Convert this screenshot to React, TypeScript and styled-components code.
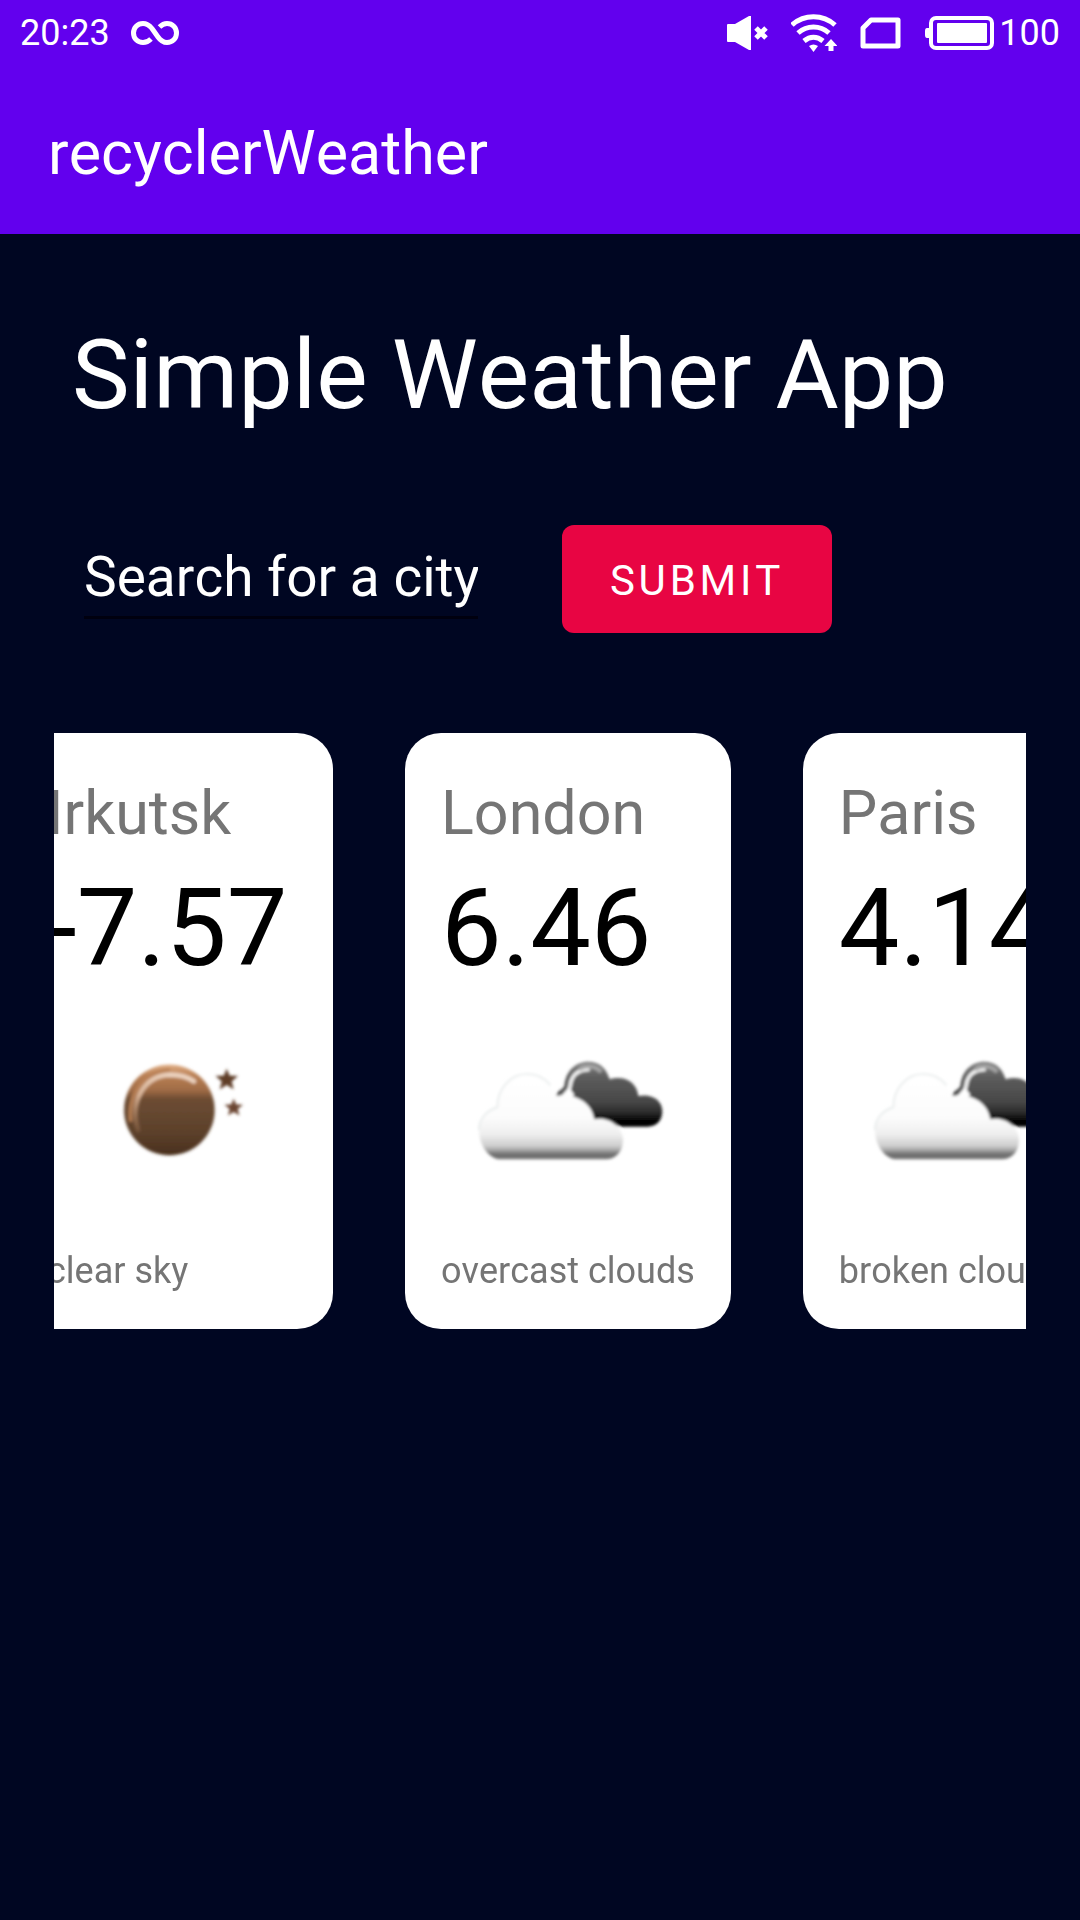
import React, { useLayoutEffect, useRef } from 'react';
import styled, { createGlobalStyle } from 'styled-components';

const GlobalStyle = createGlobalStyle`
  *, *::before, *::after { box-sizing: border-box; }
  body {
    margin: 0;
    background: #000622;
    font-family: Roboto, "Noto Sans", sans-serif;
    font-kerning: none;
  }
`;

const Screen = styled.div`
  min-height: 100vh;
  background: #000622;
  color: #fff;
`;

const TopArea = styled.header`
  background: #6200ee;
`;

const StatusBar = styled.div`
  display: flex;
  align-items: center;
  justify-content: space-between;
  height: 66px;
  padding: 0 20px;
  font-size: 36px;
  line-height: 44px;
`;

const StatusGroup = styled.div<{ $gap: number }>`
  display: flex;
  align-items: center;
  gap: ${(p) => p.$gap}px;
`;

const Battery = styled.div`
  display: flex;
  align-items: center;
  gap: 4px;
`;

const Glyph = styled.svg`
  display: block;
  flex: none;
`;

const Toolbar = styled.div`
  display: flex;
  align-items: center;
  height: 168px;
  padding: 6px 48px 0;
`;

const AppName = styled.span`
  font-size: 61px;
  line-height: 80px;
`;

const Content = styled.main`
  padding: 85px 54px 0;
`;

const Heading = styled.h1`
  margin: 0;
  padding: 0 18px;
  font-size: 97px;
  font-weight: 400;
  line-height: 112px;
`;

const SearchForm = styled.form`
  display: flex;
  align-items: flex-start;
  gap: 84px;
  margin: 94px 0 100px;
  padding: 0 30px;
`;

const CityInput = styled.input`
  width: 394px;
  height: 94px;
  padding: 12px 0 0;
  border: 0;
  border-bottom: 3px solid #00000f;
  border-radius: 0;
  outline: 0;
  background: transparent;
  color: #fff;
  font: 400 55px Roboto, "Noto Sans", sans-serif;
  font-kerning: none;

  &::placeholder {
    color: #fff;
    opacity: 1;
  }
`;

const SubmitButton = styled.button`
  width: 270px;
  height: 108px;
  padding: 2px 0 0;
  border: 0;
  border-radius: 12px;
  background: #e80543;
  color: #fff;
  font: 400 42px Roboto, "Noto Sans", sans-serif;
  font-kerning: none;
  letter-spacing: 0.09em;
  text-transform: uppercase;
  cursor: pointer;
`;

const CityList = styled.ul`
  display: flex;
  gap: 72px;
  margin: 0;
  padding: 0;
  list-style: none;
  overflow-x: auto;
  scrollbar-width: none;
`;

const Card = styled.li`
  display: flex;
  flex: none;
  flex-direction: column;
  padding: 40px 36px 36px;
  border-radius: 36px;
  background: #fff;
  color: #757575;
  white-space: nowrap;
`;

const City = styled.span`
  font-size: 61px;
  line-height: 80px;
`;

const Temperature = styled.span`
  color: #000;
  font-size: 108px;
  line-height: 150px;
`;

const WeatherIcon = styled.svg`
  display: block;
  align-self: center;
  width: 250px;
  height: 246px;
`;

const Description = styled.span`
  font-size: 36px;
  line-height: 44px;
`;

type Sky = 'clear-night' | 'clouds';

interface CityWeather {
  city: string;
  temperature: string;
  sky: Sky;
  description: string;
}

const cities: CityWeather[] = [
  { city: 'Irkutsk', temperature: '-7.57', sky: 'clear-night', description: 'clear sky' },
  { city: 'London', temperature: '6.46', sky: 'clouds', description: 'overcast clouds' },
  { city: 'Paris', temperature: '4.14', sky: 'clouds', description: 'broken clouds' },
];

const STAR = 'M0 -32 L9 -11 L34 -10 L15 6 L21 30 L0 17 L-21 30 L-15 6 L-34 -10 L-9 -11 Z';

function MoonIcon({ id }: { id: string }) {
  return (
    <WeatherIcon viewBox="0 0 250 246" role="img" aria-label="Clear night">
      <defs>
        <linearGradient id={`${id}-moon`} x1="0" y1="0" x2="0" y2="1">
          <stop offset="0" stopColor="#e0ac82" />
          <stop offset="0.12" stopColor="#b98055" />
          <stop offset="0.28" stopColor="#a06c46" />
          <stop offset="0.38" stopColor="#6d4c33" />
          <stop offset="0.75" stopColor="#5c412b" />
          <stop offset="1" stopColor="#4a301d" />
        </linearGradient>
        <linearGradient id={`${id}-shine`} x1="0" y1="1" x2="0.6" y2="0">
          <stop offset="0" stopColor="#c48f68" stopOpacity="0.2" />
          <stop offset="0.5" stopColor="#d9b498" />
          <stop offset="1" stopColor="#ecd3c0" />
        </linearGradient>
        <filter id={`${id}-soft`} x="-10%" y="-10%" width="120%" height="120%">
          <feGaussianBlur stdDeviation="5" />
        </filter>
      </defs>
      <g transform="translate(63 47) scale(0.3333)" filter={`url(#${id}-soft)`}>
        <circle cx="178" cy="180" r="136" fill={`url(#${id}-moon)`} />
        <path d="M62 215 C52 130 105 62 180 60" fill="none" stroke="#b98055" strokeWidth="10" />
        <path
          d="M84 240 C56 160 100 76 180 74 C210 74 235 82 252 94"
          fill="none"
          stroke={`url(#${id}-shine)`}
          strokeWidth="14"
          strokeLinecap="round"
        />
        <path d={STAR} transform="translate(350 88)" fill="#5e3d28" />
        <path d={STAR} transform="translate(371 172) scale(0.82)" fill="#6b4430" />
      </g>
    </WeatherIcon>
  );
}

function CloudsIcon({ id }: { id: string }) {
  return (
    <WeatherIcon viewBox="0 0 250 246" role="img" aria-label="Clouds">
      <defs>
        <linearGradient id={`${id}-dark`} gradientUnits="userSpaceOnUse" x1="0" y1="35" x2="0" y2="230">
          <stop offset="0" stopColor="#808080" />
          <stop offset="0.25" stopColor="#5c5c5c" />
          <stop offset="0.6" stopColor="#484848" />
          <stop offset="0.78" stopColor="#2c2c2c" />
          <stop offset="0.9" stopColor="#050505" />
          <stop offset="1" stopColor="#000" />
        </linearGradient>
        <linearGradient id={`${id}-light`} gradientUnits="userSpaceOnUse" x1="0" y1="72" x2="0" y2="328">
          <stop offset="0" stopColor="#fff" />
          <stop offset="0.5" stopColor="#fcfcfc" />
          <stop offset="0.7" stopColor="#efefef" />
          <stop offset="0.84" stopColor="#cfcfcf" />
          <stop offset="0.89" stopColor="#a8a8a8" />
          <stop offset="0.94" stopColor="#6e6e6e" />
          <stop offset="1" stopColor="#747474" />
        </linearGradient>
        <filter id={`${id}-soft`} x="-10%" y="-10%" width="120%" height="120%">
          <feGaussianBlur stdDeviation="5" />
        </filter>
      </defs>
      <g transform="translate(26 47) scale(0.3333)" filter={`url(#${id}-soft)`}>
        <path
          d="M262 138 C262 122 278 122 286 108 C290 62 320 35 358 35 C390 35 412 54 422 88 C465 74 504 96 508 138 C548 130 580 150 580 184 C580 212 562 230 536 230 L460 230 L380 212 L300 140 Z"
          fill={`url(#${id}-dark)`}
        />
        <path
          d="M268 146 C290 142 302 124 304 104 C308 76 328 58 362 58"
          fill="none"
          stroke="#f4f4f4"
          strokeWidth="11"
        />
        <path d="M330 58 C350 44 380 46 396 66" fill="none" stroke="#a4a4a4" strokeWidth="12" />
        <path d="M266 150 L300 112 L316 134 L300 150 Z" fill="#fff" />
        <path
          d="M95 328 C60 328 30 285 30 240 C30 205 55 180 85 172 C85 120 120 72 175 72 C215 72 245 98 262 138 C310 128 368 152 376 208 C420 198 462 230 462 270 C462 305 440 328 410 328 Z"
          fill={`url(#${id}-light)`}
        />
        <path
          d="M30 240 C30 205 55 180 85 172 C85 120 120 72 175 72 C205 72 228 84 244 106"
          fill="none"
          stroke="#e6eaea"
          strokeWidth="5"
        />
      </g>
    </WeatherIcon>
  );
}

export default function App() {
  const listRef = useRef<HTMLUListElement>(null);

  // The list opens slightly scrolled, with the first card partly out of view.
  useLayoutEffect(() => {
    if (listRef.current) listRef.current.scrollLeft = 43;
  }, []);

  return (
    <Screen>
      <GlobalStyle />
      <TopArea>
        <StatusBar>
          <StatusGroup $gap={20}>
            <span>20:23</span>
            <Glyph width="50" height="26" viewBox="0 0 50 26" fill="none" stroke="#fff" strokeWidth="5">
              <path d="M21 19 C18 22 16 22.500 13 22.500 C7.500 22.500 3.500 18.500 3.500 13 C3.500 7.500 7.500 3.500 13 3.500 C17 3.500 19.500 5.500 22 8.500 L28 17 C30.500 20.500 33 22.500 37 22.500 C42.500 22.500 46.500 18.500 46.500 13 C46.500 7.500 42.500 3.500 37 3.500 C34 3.500 32 4.500 29.500 7" />
            </Glyph>
          </StatusGroup>
          <StatusGroup $gap={23}>
            <Glyph width="42" height="36" viewBox="0 0 42 36" fill="#fff">
              <path d="M2 9 H9 L23 1 H25 V35 H23 L9 27 H2 Q1 27 1 26 V10 Q1 9 2 9 Z" />
              <path d="M30 13 L40 23 M40 13 L30 23" stroke="#fff" strokeWidth="5" />
            </Glyph>
            <Glyph width="46" height="38" viewBox="0 0 46 38" fill="none" stroke="#fff" strokeWidth="5">
              <path d="M1 11 C13 0 32 0 44 11" />
              <path d="M7 19 C16 11 29 11 38 19" />
              <path d="M13 27 C19 22 26 22 32 27" />
              <path d="M18 32 Q22.500 29 27 32 L22.500 38 Z" fill="#fff" stroke="none" />
              <path d="M40 25 L46.500 32 H42.500 V37 H37.500 V32 H33.500 Z" fill="#fff" stroke="none" />
            </Glyph>
            <Glyph width="42" height="32" viewBox="0 0 42 32" fill="none" stroke="#fff" strokeWidth="5">
              <path d="M11 3 H38 V29 H3 V11 Z" strokeLinejoin="round" />
            </Glyph>
            <Battery>
              <Glyph width="70" height="34" viewBox="0 0 70 34">
                <rect x="6" y="2" width="61" height="30" rx="5" fill="none" stroke="#fff" strokeWidth="4" />
                <rect x="12" y="7" width="50" height="20" rx="1" fill="#fff" />
                <path d="M5 12 H2 Q0 12 0 15 V19 Q0 22 2 22 H5 Z" fill="#fff" />
              </Glyph>
              <span>100</span>
            </Battery>
          </StatusGroup>
        </StatusBar>
        <Toolbar>
          <AppName>recyclerWeather</AppName>
        </Toolbar>
      </TopArea>

      <Content>
        <Heading>Simple Weather App</Heading>
        <SearchForm onSubmit={(e) => e.preventDefault()}>
          <CityInput type="text" name="city" aria-label="Search for a city" placeholder="Search for a city" />
          <SubmitButton type="submit">Submit</SubmitButton>
        </SearchForm>
        <CityList ref={listRef}>
          {cities.map((item) => (
            <Card key={item.city}>
              <City>{item.city}</City>
              <Temperature>{item.temperature}</Temperature>
              {item.sky === 'clouds' ? <CloudsIcon id={item.city} /> : <MoonIcon id={item.city} />}
              <Description>{item.description}</Description>
            </Card>
          ))}
        </CityList>
      </Content>
    </Screen>
  );
}
